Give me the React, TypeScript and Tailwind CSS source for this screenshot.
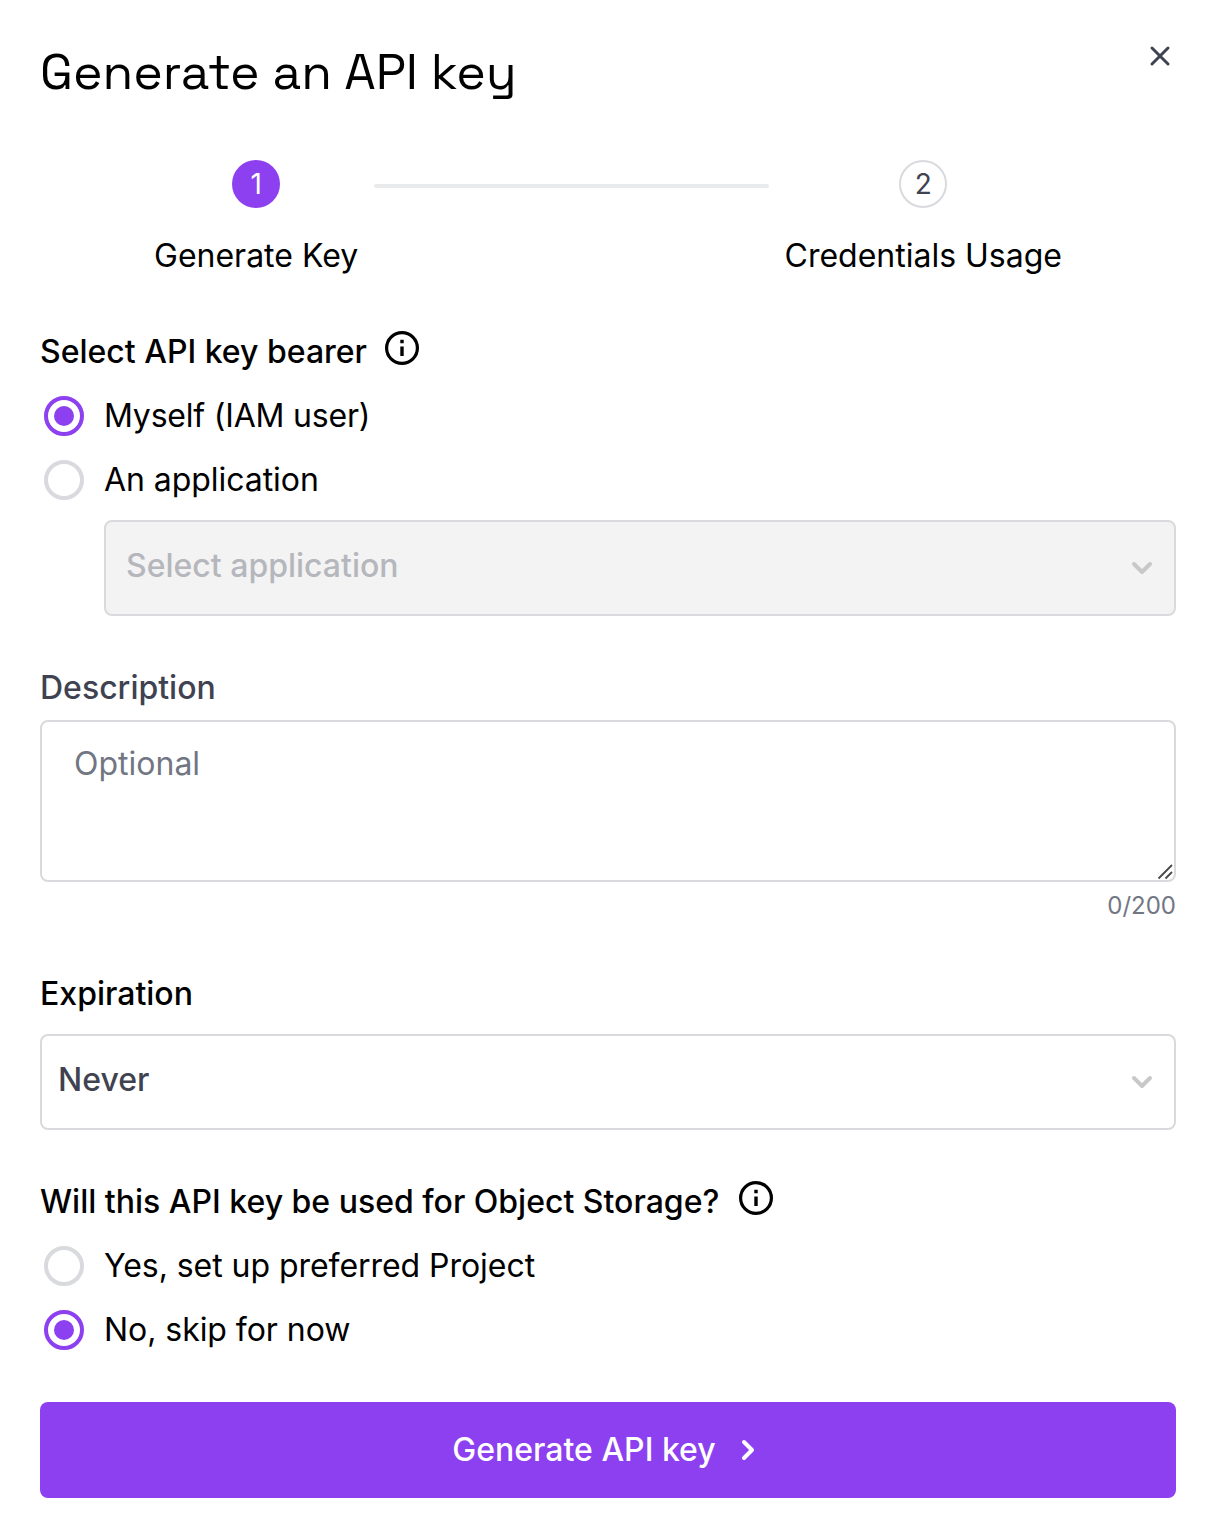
import React from "react";

function Info() {
  return (
    <svg width="36" height="36" viewBox="0 0 36 36" fill="none" className="block shrink-0">
      <circle cx="18" cy="18" r="15.4" stroke="#000" strokeWidth="3.2" />
      <path d="M18 16.4v9.6M18 9.8v3.4" stroke="#000" strokeWidth="3.4" />
    </svg>
  );
}

function Chevron() {
  return (
    <svg width="24" height="16" viewBox="0 0 24 16" fill="none" className="block shrink-0">
      <path d="M4 4l8 8 8-8" stroke="#c8c8c8" strokeWidth="4" strokeLinecap="round" strokeLinejoin="round" />
    </svg>
  );
}

function Radio({ on, label, tight }: { on?: boolean; label: string; tight?: boolean }) {
  return (
    <label className="flex h-10 items-center pl-1">
      <span
        className={
          on
            ? "flex size-10 items-center justify-center rounded-full border-4 border-[#8c40ef]"
            : "flex size-10 rounded-full border-4 border-[#d9dadd]"
        }
      >
        {on && <span className="size-5 rounded-full bg-[#8c40ef]" />}
      </span>
      <span className={tight ? "ml-5 tracking-[-0.2px]" : "ml-5 tracking-[-0.05px]"}>{label}</span>
    </label>
  );
}

export default function App() {
  return (
    <main className="h-[1538px] w-[1216px] bg-white px-10 font-['Inter',sans-serif] text-[32px] leading-10 text-black">
      <header className="flex h-[160px] justify-between pt-10">
        <h1 className="font-['Space_Grotesk','Inter',sans-serif] text-[50px] leading-[64px]">Generate an API key</h1>
        <svg className="mt-1 mr-1 block" width="24" height="24" viewBox="0 0 24 24">
          <path d="M4 4l16 16M20 4L4 20" stroke="#3f4250" strokeWidth="3" strokeLinecap="round" />
        </svg>
      </header>

      <div className="flex h-[116px] justify-center gap-4 px-[114px]">
        <div className="flex flex-col items-center">
          <span className="flex size-12 items-center justify-center rounded-full bg-[#8c40ef] text-[28px] text-white">1</span>
          <span className="mt-7">Generate Key</span>
        </div>
        <div className="mt-6 h-1 flex-1 rounded-full bg-[#e9eaeb]" />
        <div className="flex flex-col items-center">
          <span className="flex size-12 items-center justify-center rounded-full border-2 border-[#d9dadd] text-[28px] text-[#3f4250]">2</span>
          <span className="mt-7">Credentials Usage</span>
        </div>
      </div>

      <div className="mt-14 flex h-10 items-center">
        <h2 className="font-medium">Select API key bearer</h2>
        <span className="-mt-2 ml-[17px]"><Info /></span>
      </div>
      <div className="mt-6 flex flex-col gap-6">
        <Radio on tight label="Myself (IAM user)" />
        <Radio label="An application" />
      </div>
      <div className="mt-5 ml-16 flex h-24 items-center justify-between rounded-lg border-2 border-[#d9dadd] bg-[#f3f3f3] pr-5 pl-5 font-medium text-[#b5b7bd]">
        <span className="-mt-1">Select application</span>
        <Chevron />
      </div>

      <h2 className="mt-[52px] font-medium text-[#3f4250]">Description</h2>
      <div className="relative mt-3 h-[162px] rounded-lg border-2 border-[#d9dadd] px-8 pt-[22px] text-[#727683]">
        Optional
        <svg className="absolute right-0 bottom-0" width="18" height="18" viewBox="0 0 18 18" fill="none">
          <path d="M2.5 16.5L16 3M9.5 16.5L16 10" stroke="#4a4a4a" strokeWidth="1.8" />
        </svg>
      </div>
      <p className="mt-2 text-right text-2xl leading-8 text-[#727683]">0/200</p>

      <h2 className="mt-[52px] font-medium">Expiration</h2>
      <div className="mt-5 flex h-24 items-center justify-between rounded-lg border-2 border-[#d9dadd] pr-5 pl-4 font-medium text-[#3f4250]">
        <span className="-mt-1">Never</span>
        <Chevron />
      </div>

      <div className="mt-[52px] flex h-10 items-center">
        <h2 className="font-medium">Will this API key be used for Object Storage?</h2>
        <span className="-mt-2 ml-[19px]"><Info /></span>
      </div>
      <div className="mt-6 flex flex-col gap-6">
        <Radio label="Yes, set up preferred Project" />
        <Radio on label="No, skip for now" />
      </div>

      <button className="mt-[52px] flex h-24 w-full items-center justify-center rounded-lg bg-[#8c40ef] font-medium text-white">
        Generate API key
        <svg className="ml-[19px] block" width="29" height="24" viewBox="0 0 29 24" fill="none">
          <path d="M9 4l8 8-8 8" stroke="#fff" strokeWidth="4" strokeLinecap="round" strokeLinejoin="round" />
        </svg>
      </button>
    </main>
  );
}
